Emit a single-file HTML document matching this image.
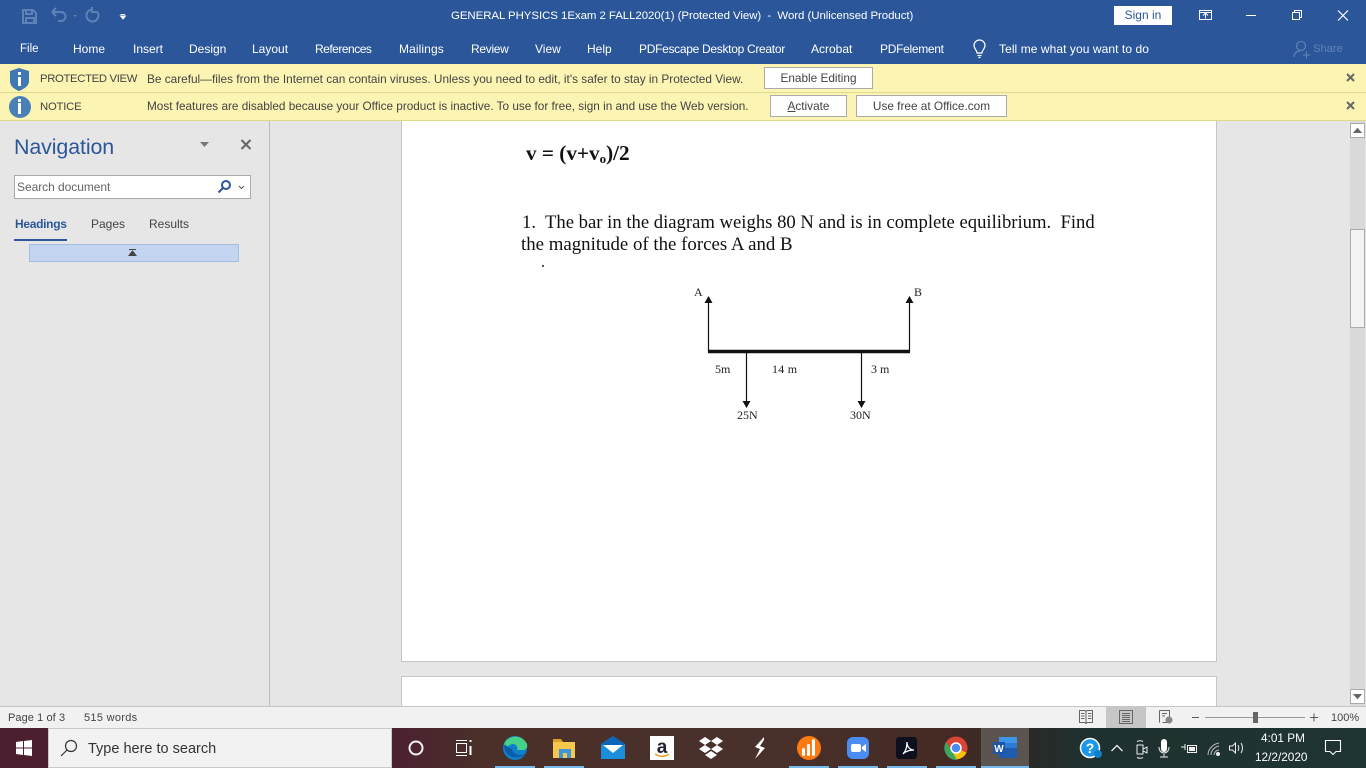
<!DOCTYPE html>
<html><head><meta charset="utf-8">
<style>
html,body{margin:0;padding:0;width:1366px;height:768px;overflow:hidden;background:#e6e6e6}
body{position:relative;font-family:"Liberation Sans",sans-serif;font-size:12px;color:#444}
.a,.t,svg{position:absolute}
.t{white-space:nowrap;line-height:16px}
.w{color:#fff}
.s{font-family:"Liberation Serif",serif;color:#111}
.b{position:absolute;background:#fff;border:1px solid #ababab;box-sizing:border-box;text-align:center;line-height:21px;color:#444;font-size:11.800px}
</style></head><body>
<!-- title bar -->
<div class="a" style="left:0;top:0;width:1366px;height:64px;background:#2b579a"></div>
<svg style="left:0;top:0" width="140" height="32" fill="none">
<g stroke="#5f82b6" stroke-width="2"><path d="M23 10h10l3 3v10H23z"/><path d="M26 10v4h6v-4M26 23v-5h8v5"/>
<path d="M52 12h9a4 4 0 0 1 0 9h-3M52 12l4-4M52 12l4 4" /><path d="M92 9.500a6 6 0 1 0 5 2M92 7v5h5"/></g>
<path d="M73 15h4l-2 2z" fill="#5f82b6"/>
<path d="M120.500 14.500h4.500M120.500 16h5l-2.500 3z" stroke="#fff" fill="#fff" stroke-width="1"/>
</svg>
<div class="t w" style="left:451px;top:8px;font-size:11.450px;letter-spacing:-.05px">GENERAL PHYSICS 1Exam 2 FALL2020(1) (Protected View)&nbsp; -&nbsp; Word (Unlicensed Product)</div>
<div class="a" style="left:1114px;top:6px;width:58px;height:19px;background:#fff;color:#2b579a;text-align:center;line-height:19px">Sign in</div>
<svg style="left:1190px;top:0" width="176" height="32" fill="none" stroke="#fff" stroke-width="1">
<path d="M9.500 10.500h12v9h-12zM9.500 12.500h12M15.500 18.500v-5M13 15.500l2.500-2.500 2.500 2.500"/>
<path d="M56 15.500h10"/>
<path d="M102.500 12.500h7v7h-7zM104.500 12.500v-2h7v7h-2"/>
<path d="M148 10.500l10 10M158 10.500l-10 10" stroke-width="1.200"/>
</svg>
<!-- menu -->
<div class="t w" style="left:20px;top:41px;font-size:11.500px">File</div>
<div class="t w" style="left:73px;top:41px">Home</div>
<div class="t w" style="left:133px;top:41px">Insert</div>
<div class="t w" style="left:189px;top:41px">Design</div>
<div class="t w" style="left:252px;top:41px">Layout</div>
<div class="t w" style="left:315px;top:41px;letter-spacing:-.5px">References</div>
<div class="t w" style="left:399px;top:41px;letter-spacing:.1px">Mailings</div>
<div class="t w" style="left:471px;top:41px;letter-spacing:-.3px">Review</div>
<div class="t w" style="left:535px;top:41px">View</div>
<div class="t w" style="left:587px;top:41px">Help</div>
<div class="t w" style="left:639px;top:41px;letter-spacing:-.3px">PDFescape Desktop Creator</div>
<div class="t w" style="left:811px;top:41px">Acrobat</div>
<div class="t w" style="left:880px;top:41px;letter-spacing:-.3px">PDFelement</div>
<svg style="left:970px;top:38px" width="20" height="22" fill="none" stroke="#fff" stroke-width="1.200"><path d="M7 15c0-3-3-4-3-7.500a5.500 5.500 0 0 1 11 0C15 11 12 12 12 15zM7.500 17.500h4M8.500 19.500h2"/></svg>
<div class="t w" style="left:999px;top:41px;letter-spacing:.07px">Tell me what you want to do</div>
<svg style="left:1292px;top:39px" width="22" height="20" fill="none" stroke="#6284b8" stroke-width="1.100"><circle cx="9" cy="7" r="4.500"/><path d="M2 18c0-4 3-6 6-6M11 16h7M14.500 12.500v7"/></svg>
<div class="t" style="left:1313px;top:41px;color:#6284b8;font-size:11.200px">Share</div>
<!-- message bars -->
<div class="a" style="left:0;top:64px;width:1366px;height:29px;background:#fcf4b2;border-bottom:1px solid #dfd98c;box-sizing:border-box"></div>
<div class="a" style="left:0;top:93px;width:1366px;height:28px;background:#fcf4b2;border-bottom:1px solid #dfd98c;box-sizing:border-box"></div>
<svg style="left:8px;top:67px" width="24" height="52">
<path d="M2 4l9-3 10 3v10c0 5-5 8-10 10C6 22 2 19 2 14z" fill="#3f78b4"/>
<circle cx="12" cy="40" r="11" fill="#4a80b8"/>
<g fill="#fff"><rect x="10" y="10" width="3" height="9"/><rect x="10" y="5" width="3" height="3"/><rect x="10" y="36" width="3" height="11"/><rect x="10" y="32" width="3" height="3"/></g>
</svg>
<div class="t" style="left:40px;top:71px;font-size:11.300px;letter-spacing:-.33px">PROTECTED VIEW</div>
<div class="t" style="left:147px;top:71px;font-size:11.820px">Be careful—files from the Internet can contain viruses. Unless you need to edit, it's safer to stay in Protected View.</div>
<div class="t" style="left:40px;top:99px;font-size:11.300px;letter-spacing:-.2px">NOTICE</div>
<div class="t" style="left:147px;top:99px;font-size:11.760px">Most features are disabled because your Office product is inactive. To use for free, sign in and use the Web version.</div>
<div class="b" style="left:764px;top:67px;width:109px;height:22px">Enable Editing</div>
<div class="b" style="left:770px;top:95px;width:77px;height:22px"><u>A</u>ctivate</div>
<div class="b" style="left:856px;top:95px;width:151px;height:22px">Use free at Office.com</div>
<svg style="left:1345px;top:72px" width="12" height="40" stroke="#666" stroke-width="2"><path d="M2 2l7 7M9 2l-7 7M2 30l7 7M9 30l-7 7"/></svg>
<!-- nav pane -->
<div class="a" style="left:269px;top:121px;width:1px;height:585px;background:#bdbdbd"></div>
<div class="t" style="left:14px;top:133px;font-size:21.400px;line-height:28px;color:#2b579a;letter-spacing:-.1px">Navigation</div>
<svg style="left:198px;top:136px" width="56" height="16"><path d="M2 6h9l-4.500 5z" fill="#777"/><path d="M43.500 4l9 9M52.500 4l-9 9" stroke="#666" stroke-width="2"/></svg>
<div class="a" style="left:14px;top:175px;width:237px;height:24px;background:#fff;border:1px solid #ababab;box-sizing:border-box"></div>
<div class="t" style="left:17px;top:179px;color:#666;letter-spacing:-.05px">Search document</div>
<svg style="left:216px;top:178px" width="32" height="18" fill="none"><circle cx="10" cy="7" r="4" stroke="#2b579a" stroke-width="2"/><path d="M7 10l-4.500 4.500" stroke="#2b579a" stroke-width="2"/><path d="M23 8l2.500 2.500L28 8" stroke="#555"/></svg>
<div class="t" style="left:15px;top:216px;font-weight:bold;color:#2b579a;letter-spacing:-.3px">Headings</div>
<div class="a" style="left:14px;top:239px;width:53px;height:2px;background:#2b579a"></div>
<div class="t" style="left:91px;top:216px">Pages</div>
<div class="t" style="left:149px;top:216px">Results</div>
<div class="a" style="left:29px;top:244px;width:210px;height:18px;background:#c3d5f0;border:1px solid #a3bde3;box-sizing:border-box"></div>
<svg style="left:128px;top:249px" width="10" height="8"><path d="M1 .5h7M1 6.500L4.500 2 8 6.500z" fill="#444" stroke="#444"/></svg>
<!-- doc -->
<div class="a" style="left:401px;top:121px;width:816px;height:541px;background:#fff;border:1px solid #c6c6c6;border-top:0;box-sizing:border-box"></div>
<div class="a" style="left:401px;top:676px;width:816px;height:30px;background:#fff;border:1px solid #c6c6c6;border-bottom:0;box-sizing:border-box"></div>
<div class="t s" style="left:526px;top:142px;font-size:21.200px;line-height:22px;font-weight:bold">v = (v+v<span style="font-size:13px;position:relative;top:3px">o</span>)/2</div>
<div class="t s" style="left:522px;top:212px;font-size:18.670px;line-height:22px">1.&nbsp; The bar in the diagram weighs 80 N and is in complete equilibrium.&nbsp; Find</div>
<div class="t s" style="left:521px;top:234px;font-size:18.850px;line-height:22px">the magnitude of the forces A and B</div>
<div class="a" style="left:542px;top:265px;width:2px;height:2px;background:#555"></div>
<!-- diagram -->
<svg style="left:680px;top:275px" width="260" height="155">
<path d="M28.500 24v53M229.500 24v53M66.500 77v49M181.500 77v49" stroke="#111" stroke-width="1.200"/>
<path d="M28 76.500h202" stroke="#111" stroke-width="3.600"/>
<path d="M28.500 21l-4 7h8zM229.500 21l-4 7h8zM62.500 126h8l-4 7zM177.500 126h8l-4 7z" fill="#111"/>
<g font-family="Liberation Serif,serif" font-size="12" fill="#222">
<text x="14" y="21">A</text><text x="234" y="21">B</text>
<text x="35" y="98">5m</text><text x="92" y="98" letter-spacing=".25">14 m</text><text x="191" y="98">3 m</text>
<text x="57" y="144">25N</text><text x="170" y="144">30N</text></g>
</svg>
<!-- scrollbar -->
<div class="a" style="left:1350px;top:121px;width:15px;height:585px;background:#d9d9d9"></div>
<div class="a" style="left:1350px;top:123px;width:15px;height:15px;background:#fff;border:1px solid #ababab;box-sizing:border-box"></div>
<svg style="left:1353px;top:126px" width="10" height="8"><path d="M1 6.500L4.500 2.500 8 6.500z" fill="#666" stroke="#666"/></svg>
<div class="a" style="left:1350px;top:229px;width:15px;height:99px;background:#f3f3f3;border:1px solid #ababab;box-sizing:border-box"></div>
<div class="a" style="left:1350px;top:689px;width:15px;height:15px;background:#fff;border:1px solid #ababab;box-sizing:border-box"></div>
<svg style="left:1353px;top:693px" width="10" height="8"><path d="M1 1.500h7L4.500 5.500z" fill="#666" stroke="#666"/></svg>
<!-- status bar -->
<div class="a" style="left:0;top:706px;width:1366px;height:22px;background:#f1f1f1;border-top:1px solid #c6c6c6;box-sizing:border-box"></div>
<div class="t" style="left:8px;top:710px;font-size:11px;letter-spacing:.08px">Page 1 of 3</div>
<div class="t" style="left:84px;top:710px;font-size:11px;letter-spacing:.3px">515 words</div>
<div class="a" style="left:1106px;top:707px;width:40px;height:21px;background:#c6c6c6"></div>
<svg style="left:1075px;top:707px" width="110" height="21" fill="none" stroke="#666">
<path d="M4.500 3.500h5.500l1 1 1-1h5.500v12h-5.500l-1 1-1-1H4.500zM11 4.500v11M6 6.500h3.500M6 9h3.500M6 11.500h3.500M13 6.500h3.500M13 9h3.500M13 11.500h3.500"/>
<path d="M44.500 3.500h13v13h-13zM47 6.500h8M47 8.500h8M47 10.500h8M47 12.500h8M47 14.500h8"/>
<path d="M84.500 3.500h10v12h-7M84.500 3.500v12M87 6.500h5M87 9h3"/><circle cx="94" cy="13" r="3.500" fill="#888" stroke="none"/>
</svg>
<svg style="left:1190px;top:707px" width="130" height="21">
<path d="M15 10.500h100" stroke="#999" fill="none"/>
<path d="M2 10.500h7M120 10.500h8M124 6.500v8" stroke="#555" fill="none"/>
<rect x="63" y="5" width="5" height="11" fill="#666"/>
</svg>
<div class="t" style="left:1331px;top:710px;font-size:11px">100%</div>
<!-- taskbar -->
<div class="a" style="left:0;top:728px;width:1366px;height:40px;background:linear-gradient(90deg,#4c1f30 0,#4c2130 400px,#4a3029 480px,#49302a 800px,#452a24 950px,#2a2a28 1030px,#1e302f 1080px,#1f3533 1366px)"></div>
<svg style="left:16px;top:740px" width="17" height="16" fill="#fff"><path d="M0 2l7-1v6.500H0zM8 1l8-1v7.500H8zM0 8.500h7V15l-7-1zM8 8.500h8V16l-8-1z"/></svg>
<div class="a" style="left:48px;top:728px;width:344px;height:40px;background:#f2f2f2;border:1px solid #c8c8c8;box-sizing:border-box"></div>
<svg style="left:60px;top:739px" width="20" height="20" fill="none" stroke="#333" stroke-width="1.200"><circle cx="11" cy="7" r="5.500"/><path d="M7 11l-6 6"/></svg>
<div class="t" style="left:88px;top:741px;font-size:14.500px;color:#333">Type here to search</div>
<svg style="left:400px;top:728px" width="640" height="40">
<rect x="581" y="0" width="48" height="40" fill="#5c5450"/>
<g fill="#76b9ed"><rect x="95" y="38" width="40" height="2"/><rect x="144" y="38" width="40" height="2"/><rect x="389" y="38" width="40" height="2"/><rect x="438" y="38" width="40" height="2"/><rect x="487" y="38" width="40" height="2"/><rect x="536" y="38" width="40" height="2"/><rect x="581" y="38" width="48" height="2"/></g>
<circle cx="16" cy="20" r="6.500" fill="none" stroke="#f4f4f4" stroke-width="2"/>
<g fill="none" stroke="#fff"><path d="M56.500 15.500h10v9h-10zM56 12.500h11M56 27.500h11"/><path d="M70.500 12v2M70.500 18v9" stroke-width="2"/></g>
<g transform="translate(0 -3)">
<circle cx="115" cy="23" r="12" fill="#0f7fc9"/><path d="M104 20c2-10 18-12 23-1 1 3-1 6-4 6h-6c2-4-3-8-7-5-2 1-4 2-6 0z" fill="#47d08a"/><path d="M112 24c1 6 8 8 14 4-4 6-16 6-20-1-2-4-2-6-1-8 1 3 4 4 7 5z" fill="#0a5cab"/>
<path d="M153 15h7l2 2h13v16h-22z" fill="#f5c84b"/><path d="M153 14h8l2 3h-10z" fill="#d9a02b"/><rect x="159" y="24" width="12" height="9" fill="#3d96dc"/><rect x="163" y="28" width="4" height="5" fill="#f5c84b"/>
<path d="M201 19l12-8 12 8v15h-24z" fill="#1b8fdc"/><path d="M201 19l12 8 12-8-12-8z" fill="#0c65b6"/><path d="M203 20h20l-10 8z" fill="#fff"/>
<rect x="250" y="11" width="24" height="24" fill="#fff"/>
<text x="262" y="28" font-family="Liberation Sans,sans-serif" font-size="19" font-weight="bold" fill="#223" text-anchor="middle">a</text>
<path d="M255 29c5 3 10 3 14 0" stroke="#f39a1d" fill="none" stroke-width="1.500"/>
<path d="M305 12l6 4-6 4-6-4zM317 12l6 4-6 4-6-4zM305 20l6 4-6 4-6-4zM317 20l6 4-6 4-6-4zM311 26l6 4-6 4-6-4z" fill="#fff"/>
<path d="M364 12l-9 10 5 2-5 10 10-11-5-2 4-6z" fill="#fff"/>
<circle cx="409" cy="23" r="12" fill="#ff7a0f"/><g fill="#fff"><rect x="402" y="23" width="3" height="8" rx="1.500"/><rect x="407" y="19" width="3" height="12" rx="1.500"/><rect x="412" y="14" width="3" height="17" rx="1.500"/></g>
<rect x="447" y="12" width="22" height="22" rx="6" fill="#4a8cf0"/><rect x="451" y="19" width="10" height="8" rx="2" fill="#fff"/><path d="M462 22l4-3v8l-4-3z" fill="#fff"/>
<rect x="496" y="12" width="21" height="22" rx="3" fill="#0b0f1e"/><path d="M503 29c3-3 4-7 4-12 0 5 3 8 7 8-4 0-8 1-11 4z" fill="none" stroke="#fff" stroke-width="1.300"/>
<circle cx="556" cy="23" r="11.500" fill="#db4437"/><path d="M556 23l10 5.500a11.500 11.500 0 0 1-16 4z" fill="#f4c20d" transform="rotate(-5 556 23)"/><path d="M546 29a11.500 11.500 0 0 1 0-12l6 9 5 9a11.500 11.500 0 0 1-11-6z" fill="#3da55d"/><circle cx="556" cy="23" r="5" fill="#4a8af0" stroke="#fff" stroke-width="1.500"/>
<rect x="599" y="12" width="18" height="21" fill="#1f5cb0"/><rect x="599" y="12" width="18" height="6" fill="#3d94e8"/><rect x="599" y="18" width="18" height="5" fill="#2b7cd3"/>
<rect x="593" y="17" width="12" height="12" fill="#1d56a6"/>
<text x="599" y="27" font-family="Liberation Sans,sans-serif" font-size="10" font-weight="bold" fill="#fff" text-anchor="middle">W</text>
</g>
</svg>
<svg style="left:1075px;top:736px" width="150" height="28" fill="none" stroke="#eee">
<circle cx="15" cy="12" r="9.500" fill="#1c97e8" stroke="#fff" stroke-width="1.500"/>
<text x="15" y="17" font-family="Liberation Sans,sans-serif" font-size="14" font-weight="bold" fill="#fff" stroke="none" text-anchor="middle">?</text>
<circle cx="23" cy="18" r="4" fill="#0f7fc9" stroke="none"/>
<path d="M36.500 15l5.500-5.500 5.500 5.500" stroke-width="1.300"/>
<path d="M62 9h6v9h-6zM68 13l4-2v6l-4-2zM62 5.500c2-1 5-1 6 0M62 21.500c2 1 5 1 6 0"/>
<rect x="86" y="3" width="6" height="13" rx="3" fill="#fff" stroke="none"/><path d="M84 11c0 8 10 8 10 0M89 18v3M85 21h8"/>
<path d="M106 11h4M110 8v6M112.500 9.500h9v7h-9z"/><rect x="114" y="11" width="6" height="4" fill="#eee" stroke="none"/>
<path d="M133 19c0-6 5-11 11-12M136 19c0-4 3-8 8-9M139 19c0-2 2-5 5-5" stroke="#bbb"/><circle cx="143" cy="18" r="1.500" fill="#eee"/>
</svg>
<svg style="left:1225px;top:736px" width="26" height="26" fill="none" stroke="#eee"><path d="M4.500 10h3l3-3v10l-3-3h-3zM13 9c1 2 1 4 0 6M16 7c2 3 2 7 0 10" /></svg>
<div class="t w" style="left:1261px;top:730px;font-size:11.800px">4:01 PM</div>
<div class="t w" style="left:1255px;top:749px;font-size:11.800px">12/2/2020</div>
<svg style="left:1324px;top:739px" width="18" height="18" fill="none" stroke="#fff" stroke-width="1.100"><path d="M1.500 1.500h15v11h-4.500l-3 3-3-3H1.500z"/></svg>
</body></html>
